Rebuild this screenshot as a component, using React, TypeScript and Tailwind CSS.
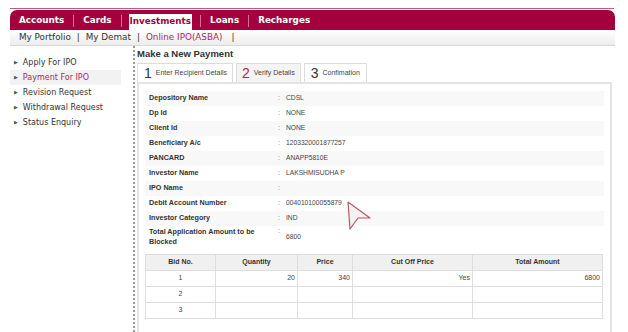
import React from 'react';

const navItems = ['Accounts', 'Cards', 'Investments', 'Loans', 'Recharges'];
const sideItems = ['Apply For IPO', 'Payment For IPO', 'Revision Request', 'Withdrawal Request', 'Status Enquiry'];

const details: [string, string][] = [
  ['Depository Name', 'CDSL'],
  ['Dp Id', 'NONE'],
  ['Client Id', 'NONE'],
  ['Beneficiary A/c', '1203320001877257'],
  ['PANCARD', 'ANAPP5810E'],
  ['Investor Name', 'LAKSHMISUDHA P'],
  ['IPO Name', ''],
  ['Debit Account Number', '004010100055879'],
  ['Investor Category', 'IND'],
];

const bids = [
  ['1', '20', '340', 'Yes', '6800'],
  ['2', '', '', '', ''],
  ['3', '', '', '', ''],
];

const App: React.FC = () => {
  return (
    <div className="relative w-[628px] h-[332px] overflow-hidden bg-white">
      {/* top rule */}
      <div className="ml-[10px] mt-[8px] w-[604px] h-[1px] bg-[#c45a80]" />

      {/* main nav */}
      <div className="ml-[10px] mt-[1px] w-[605px] h-[20px] rounded-t-[7px] bg-[#a4003d] flex items-center pl-[9px] pt-[1px] font-['DejaVu_Sans',sans-serif] text-[8.8px] font-bold text-white">
        {navItems.map((item, i) => (
          <React.Fragment key={item}>
            {i > 0 && <span className="w-[1px] h-[12px] bg-[#d07090] mx-[9px]" />}
            <span
              className={
                item === 'Investments'
                  ? 'bg-white text-[#a4003d] px-[1px] -ml-[2px] -mr-[1px] h-[16px] mt-[2px] leading-[15px]'
                  : ''
              }
            >
              {item}
            </span>
          </React.Fragment>
        ))}
      </div>

      {/* sub nav */}
      <div className="ml-[10px] w-[605px] h-[16px] bg-gradient-to-b from-white to-[#ececec] border-b border-[#d8d8d8] flex items-center pl-[9px] gap-[6px] font-['DejaVu_Sans',sans-serif] text-[8.8px] text-[#333]">
        <span>My Portfolio</span>
        <span>|</span>
        <span>My Demat</span>
        <span>|</span>
        <span className="text-[#b0245a]">Online IPO(ASBA)</span>
        <span className="ml-[3px]">|</span>
      </div>

      <div className="flex ml-[10px]">
        {/* sidebar */}
        <div className="w-[123px] pt-[9px] font-['DejaVu_Sans',sans-serif] text-[8px] text-[#333]">
          {sideItems.map((item) => (
            <div
              key={item}
              className={`flex items-center h-[15px] pl-[4px] ${
                item === 'Payment For IPO' ? 'bg-[#f2f2f2] text-[#b0245a] mr-[12px]' : ''
              }`}
            >
              <span className="text-[5px] text-[#555] mr-[5px]">▶</span>
              {item}
            </div>
          ))}
        </div>

        {/* content */}
        <div className="relative border-l-2 border-dotted border-[#9a9a9a] h-[290px] pl-[2px] pt-[2px] font-['Liberation_Sans',Arial,sans-serif]">
          <div className="text-[9.5px] font-bold text-[#333] leading-[12px]">Make a New Payment</div>

          {/* step tabs */}
          <div className="flex gap-[3px] mt-[3px] h-[19px] items-end">
            <div className="flex items-center h-[19px] border border-b-0 border-[#dcdcdc] pl-[6px] pr-[5px] gap-[4px] bg-white">
              <span className="text-[14px] text-[#333]">1</span>
              <span className="text-[7px] text-[#444]">Enter Recipient Details</span>
            </div>
            <div className="flex items-center h-[19px] border border-b-0 border-[#dcdcdc] px-[5px] gap-[4px] bg-[#f4f4f4]">
              <span className="text-[14px] text-[#b0245a]">2</span>
              <span className="text-[7px] text-[#444]">Verify Details</span>
            </div>
            <div className="flex items-center h-[19px] border border-b-0 border-[#dcdcdc] px-[6px] gap-[4px] bg-white">
              <span className="text-[14px] text-[#333]">3</span>
              <span className="text-[7px] text-[#444]">Confimation</span>
            </div>
          </div>

          {/* panel */}
          <div className="w-[475px] h-[260px] border-2 border-[#e4e4e4] pt-[7px] px-[6px]">
            {details.map(([label, value], i) => (
              <div
                key={label}
                className={`flex items-center h-[15px] ${i % 2 === 0 ? 'bg-[#f8f8f8]' : ''}`}
              >
                <span className="w-[133px] pl-[4px] text-[7.2px] font-bold text-[#333]">{label}</span>
                <span className="w-[8px] text-[7px] text-[#777]">:</span>
                <span className="text-[6.7px] text-[#444]">{value}</span>
              </div>
            ))}
            <div className="flex items-center h-[22px]">
              <span className="w-[133px] pl-[4px] text-[7.2px] font-bold text-[#333] leading-[10px]">
                Total Application Amount to be Blocked
              </span>
              <span className="w-[8px] text-[7px] text-[#777] self-start">:</span>
              <span className="text-[6.7px] text-[#444]">6800</span>
            </div>

            {/* bid table */}
            <table className="mt-[6px] w-[458px] border-collapse text-[7px] text-[#444]">
              <thead>
                <tr className="bg-[#f0f0f0] h-[16px]">
                  <th className="w-[70px] border border-[#dedede] font-bold text-[#333]">Bid No.</th>
                  <th className="w-[82px] border border-[#dedede] font-bold text-[#333]">Quantity</th>
                  <th className="w-[55px] border border-[#dedede] font-bold text-[#333]">Price</th>
                  <th className="w-[120px] border border-[#dedede] font-bold text-[#333]">Cut Off Price</th>
                  <th className="border border-[#dedede] font-bold text-[#333]">Total Amount</th>
                </tr>
              </thead>
              <tbody>
                {bids.map((row) => (
                  <tr key={row[0]} className="h-[16px]">
                    <td className="border border-[#dedede] text-center">{row[0]}</td>
                    <td className="border border-[#dedede] text-right pr-[2px]">{row[1]}</td>
                    <td className="border border-[#dedede] text-right pr-[2px]">{row[2]}</td>
                    <td className="border border-[#dedede] text-right pr-[2px]">{row[3]}</td>
                    <td className="border border-[#dedede] text-right pr-[2px]">{row[4]}</td>
                  </tr>
                ))}
              </tbody>
            </table>
          </div>
        </div>
      </div>

      {/* callout arrow */}
      <svg className="absolute left-[345px] top-[197px]" width="30" height="36" viewBox="0 0 30 36">
        <path d="M3 5 L25 21 L13 21 L5 32 Z" fill="#f6f0f0" stroke="#b05a6a" strokeWidth="1.2" strokeLinejoin="round" />
      </svg>
    </div>
  );
};

export default App;
